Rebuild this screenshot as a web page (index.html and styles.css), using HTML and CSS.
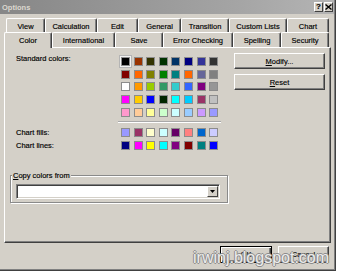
FILE: index.html
```html
<!DOCTYPE html>
<html>
<head>
<meta charset="utf-8">
<link rel="stylesheet" href="styles.css">
</head>
<body>
<div class="dialog">
  <div class="titlebar">
    <span class="title">Options</span>
    <div class="title-btns">
      <span class="tbtn">?</span>
      <span class="tbtn"><svg width="7" height="6" viewBox="0 0 7 6"><path d="M0.5 0.5 L6.5 5.5 M6.5 0.5 L0.5 5.5" stroke="#000" stroke-width="1.4" fill="none"/></svg></span>
    </div>
  </div>
  <div class="body">
    <div class="tabrow row1">
      <div class="tab">View</div>
      <div class="tab">Calculation</div>
      <div class="tab">Edit</div>
      <div class="tab">General</div>
      <div class="tab">Transition</div>
      <div class="tab">Custom Lists</div>
      <div class="tab">Chart</div>
    </div>
    <div class="tabrow row2">
      <div class="tab active">Color</div>
      <div class="tab">International</div>
      <div class="tab">Save</div>
      <div class="tab">Error Checking</div>
      <div class="tab">Spelling</div>
      <div class="tab">Security</div>
    </div>
    <div class="panel">
      <div class="top">
        <div class="palette">
          <div class="lbl first">Standard colors:</div>
          <span class="sw selected" style="background:#000000"></span>
          <span class="sw" style="background:#993300"></span>
          <span class="sw" style="background:#333300"></span>
          <span class="sw" style="background:#003300"></span>
          <span class="sw" style="background:#003366"></span>
          <span class="sw" style="background:#000080"></span>
          <span class="sw" style="background:#333399"></span>
          <span class="sw" style="background:#333333"></span>
          <div></div>
          <span class="sw" style="background:#800000"></span>
          <span class="sw" style="background:#ff6600"></span>
          <span class="sw" style="background:#808000"></span>
          <span class="sw" style="background:#008000"></span>
          <span class="sw" style="background:#008080"></span>
          <span class="sw" style="background:#ff6600"></span>
          <span class="sw" style="background:#666699"></span>
          <span class="sw" style="background:#808080"></span>
          <div></div>
          <span class="sw" style="background:#ffffff"></span>
          <span class="sw" style="background:#ff9900"></span>
          <span class="sw" style="background:#99cc00"></span>
          <span class="sw" style="background:#339966"></span>
          <span class="sw" style="background:#33cccc"></span>
          <span class="sw" style="background:#3366ff"></span>
          <span class="sw" style="background:#800080"></span>
          <span class="sw" style="background:#969696"></span>
          <div></div>
          <span class="sw" style="background:#ff00ff"></span>
          <span class="sw" style="background:#ffcc00"></span>
          <span class="sw" style="background:#0000ff"></span>
          <span class="sw" style="background:#002600"></span>
          <span class="sw" style="background:#00ffff"></span>
          <span class="sw" style="background:#00ccff"></span>
          <span class="sw" style="background:#993366"></span>
          <span class="sw" style="background:#c0c0c0"></span>
          <div></div>
          <span class="sw" style="background:#ff99cc"></span>
          <span class="sw" style="background:#ffcc99"></span>
          <span class="sw" style="background:#ffff99"></span>
          <span class="sw" style="background:#ccffcc"></span>
          <span class="sw" style="background:#ccffff"></span>
          <span class="sw" style="background:#99ccff"></span>
          <span class="sw" style="background:#cc99ff"></span>
          <span class="sw" style="background:#9999ff"></span>
          <div></div>
          <div class="sep"></div>
          <div class="lbl">Chart fills:</div>
          <span class="sw" style="background:#9999ff"></span>
          <span class="sw" style="background:#993366"></span>
          <span class="sw" style="background:#ffffcc"></span>
          <span class="sw" style="background:#ccffff"></span>
          <span class="sw" style="background:#660066"></span>
          <span class="sw" style="background:#ff8080"></span>
          <span class="sw" style="background:#0066cc"></span>
          <span class="sw" style="background:#ccccff"></span>
          <div class="lbl">Chart lines:</div>
          <span class="sw" style="background:#000080"></span>
          <span class="sw" style="background:#ff00ff"></span>
          <span class="sw" style="background:#ffff00"></span>
          <span class="sw" style="background:#00ffff"></span>
          <span class="sw" style="background:#800080"></span>
          <span class="sw" style="background:#800000"></span>
          <span class="sw" style="background:#008080"></span>
          <span class="sw" style="background:#0000ff"></span>
        </div>
        <div class="side-btns">
          <button class="btn"><u>M</u>odify...</button>
          <button class="btn"><u>R</u>eset</button>
        </div>
      </div>
      <div class="group">
        <div class="group-label"><u>C</u>opy colors from</div>
        <div class="combo"><span class="drop"><svg width="5" height="3" viewBox="0 0 5 3"><path d="M0 0 H5 L2.5 3 Z" fill="#000"/></svg></span></div>
      </div>
    </div>
    <div class="footer">
      <button class="btn ok">OK</button>
      <button class="btn cancel">Cancel</button>
    </div>
  </div>
  <div class="watermark">irwinj.blogspot.com</div>
</div>
</body>
</html>
```
FILE: styles.css
```css
html, body {
  margin: 0;
  padding: 0;
  background: #ffffff;
}
body {
  font-family: "Liberation Sans", Arial, sans-serif;
  font-size: 7.5px;
  color: #000000;
  -webkit-text-stroke: 0.15px #000000;
}
.dialog {
  position: relative;
  width: 336px;
  height: 271px;
  box-sizing: border-box;
  background: #d4d0c8;
  border-right: 1px solid #404040;
  border-bottom: 1px solid #404040;
  box-shadow: inset -1px -1px 0 #808080;
}
.titlebar {
  height: 14px;
  margin-right: 1px;
  padding: 0 1px 0 2px;
  display: flex;
  align-items: center;
  justify-content: space-between;
  background: linear-gradient(to right, #878787, #a4a4a4 70%, #b4b4b4);
}
.title {
  color: #dcd8d0;
  -webkit-text-stroke: 0;
  font-weight: bold;
  font-size: 7.5px;
}
.title-btns {
  display: flex;
  gap: 1px;
}
.tbtn {
  width: 9px;
  height: 10px;
  box-sizing: border-box;
  background: #d4d0c8;
  border: 1px solid;
  border-color: #ffffff #404040 #404040 #ffffff;
  display: flex;
  align-items: center;
  justify-content: center;
  font-weight: bold;
  font-size: 8px;
  line-height: 8px;
  color: #000;
}
.body {
  padding: 4px 3px 0 4px;
}
.tabrow {
  display: grid;
  margin-left: 2px;
}
.row1 {
  height: 14px;
  grid-template-columns: 39px 52px 41px 43px 48px 58px 42px;
}
.row2 {
  height: 15px;
  grid-template-columns: 46px 63px 48px 70px 48px 48px;
}
.tab {
  box-sizing: border-box;
  border-left: 1px solid #ffffff;
  border-top: 1px solid #ffffff;
  border-right: 1px solid #404040;
  box-shadow: inset -1px 0 0 #808080;
  border-radius: 2px 2px 0 0;
  background: #d4d0c8;
  text-align: center;
  white-space: nowrap;
  padding-top: 3px;
  line-height: 9px;
}
.tab.active {
  position: relative;
  z-index: 1;
  margin-left: -2px;
  margin-bottom: -1px;
}
.panel {
  width: 327px;
  height: 196px;
  box-sizing: border-box;
  border: 1px solid;
  border-color: #ffffff #404040 #404040 #ffffff;
  box-shadow: inset -1px -1px 0 #808080;
}
.top {
  display: flex;
  align-items: flex-start;
  padding: 5px 5px 0 11px;
}
.palette {
  display: grid;
  grid-template-columns: 101.4px repeat(8, 9px);
  grid-template-rows: repeat(5, 9px) 4.5px 9px 9px;
  column-gap: 3.6px;
  row-gap: 3.65px;
  margin-top: 4px;
}
.lbl {
  line-height: 9px;
  white-space: nowrap;
}
.lbl.first {
  margin-top: -3px;
}
.sw {
  display: block;
  width: 9px;
  height: 9px;
  box-sizing: border-box;
  border: 1px solid #8c8c8c;
}
.sw.selected {
  box-shadow: 0 0 0 1px #f2f2f2, 0 0 0 2px #b4b4b4;
}
.sep {
  grid-column: 2 / -1;
  align-self: center;
  margin: 0 -3px;
  height: 0;
  border-top: 1px solid #a8a8a8;
  border-bottom: 1px solid #ffffff;
}
.side-btns {
  margin-left: auto;
  width: 91px;
  display: flex;
  flex-direction: column;
  gap: 5px;
}
.btn {
  display: block;
  height: 16px;
  padding: 0;
  margin: 0;
  box-sizing: border-box;
  background: #d4d0c8;
  border: 1px solid;
  border-color: #ffffff #404040 #404040 #ffffff;
  box-shadow: inset -1px -1px 0 #808080;
  font-family: "Liberation Sans", Arial, sans-serif;
  font-size: 7.5px;
  color: #000000;
  -webkit-text-stroke: 0.15px #000000;
  text-align: center;
}
.group {
  width: 218px;
  box-sizing: border-box;
  margin: 25px 0 0 5px;
  padding: 0 0 3px 0;
  border: 1px solid #8a8a8a;
  box-shadow: inset 1px 1px 0 #ffffff, 1px 1px 0 #ffffff;
}
.group-label {
  width: fit-content;
  margin: -5px 0 0 1px;
  padding: 0 1px;
  background: #d4d0c8;
  line-height: 9px;
  white-space: nowrap;
}
.combo {
  width: 204px;
  height: 15px;
  box-sizing: border-box;
  margin: 4px 0 0 5px;
  background: #ffffff;
  border: 1px solid;
  border-color: #808080 #ffffff #ffffff #808080;
  box-shadow: inset 1px 1px 0 #404040, inset -1px -1px 0 #d4d0c8;
  padding: 1px 1px 1px 1px;
  display: flex;
  justify-content: flex-end;
}
.drop {
  width: 11px;
  height: 11px;
  box-sizing: border-box;
  background: #d4d0c8;
  border: 1px solid;
  border-color: #ffffff #404040 #404040 #ffffff;
  display: flex;
  align-items: center;
  justify-content: center;
}
.drop svg {
  display: block;
}
.footer {
  display: flex;
  justify-content: flex-end;
  gap: 6px;
  margin-top: 3px;
  padding-right: 3px;
}
.footer .btn {
  height: 17px;
}
.ok {
  width: 52px;
  border: 1px solid #000000;
  box-shadow: inset 1px 1px 0 #ffffff, inset -1px -1px 0 #404040, inset -2px -2px 0 #808080;
}
.cancel {
  width: 51px;
}
.watermark {
  position: absolute;
  left: 193px;
  top: 250px;
  font-family: "Liberation Sans", Arial, sans-serif;
  font-size: 16px;
  line-height: 16px;
  color: #ededed;
  -webkit-text-stroke: 0;
  white-space: nowrap;
  text-shadow: -1px 0 0 #8c8c8c, 1px 0 0 #8c8c8c, 0 -1px 0 #8c8c8c, 0 1px 0 #8c8c8c;
}
```
